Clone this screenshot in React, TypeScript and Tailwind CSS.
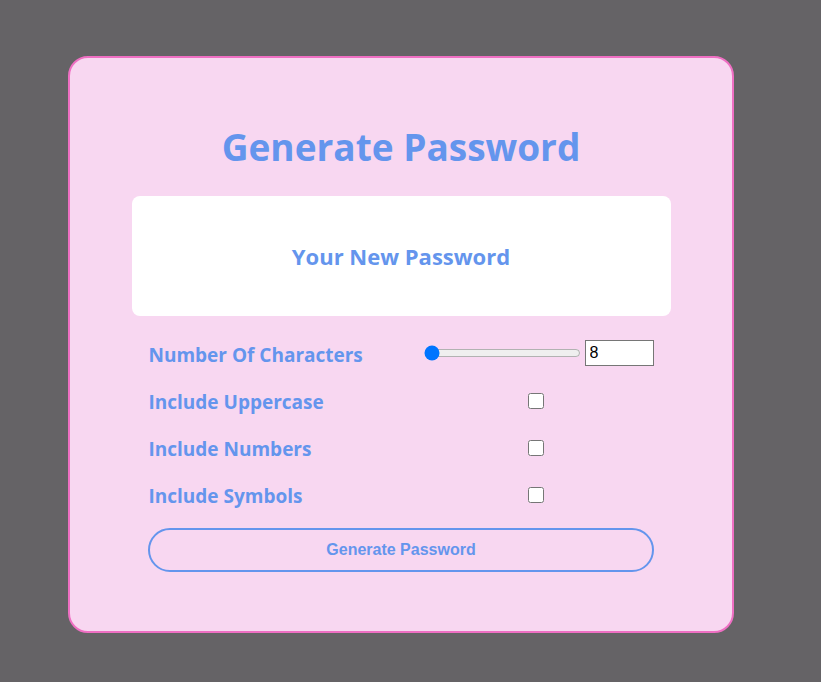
import React, { useState } from "react";

export default function App() {
  const [len, setLen] = useState(8);
  const label = "text-[19px] font-bold text-[#6495ed] leading-none";
  return (
    <div className="min-h-[682px] w-full bg-[#656366] pt-[56px] pl-[68px]" style={{ fontFamily: '"Open Sans", "Noto Sans", sans-serif' }}>
      <div className="w-[666px] h-[577px] rounded-[20px] border-2 border-[#ef6fc3] bg-[#f8d7f1] flex flex-col items-center">
        <h1 className="mt-[66px] text-[37px] font-bold leading-[46px] text-[#6495ed]">Generate Password</h1>
        <div className="mt-[26px] w-[539px] h-[120px] rounded-[8px] bg-white flex items-center justify-center">
          <span className="text-[22px] font-bold text-[#6495ed]">Your New Password</span>
        </div>
        <div className="mt-[16px] w-[505px] grid grid-cols-[273px_232px] auto-rows-[47px] items-center">
          <span className={label}>Number Of Characters</span>
          <div className="flex items-center justify-center gap-[4px] pl-[2px] mb-[6px]">
            <input
              type="range"
              min={8}
              max={32}
              value={len}
              onChange={(e) => setLen(Number(e.target.value))}
              className="w-[160px] m-0"
            />
            <input
              type="number"
              value={len}
              onChange={(e) => setLen(Number(e.target.value))}
              className="w-[69px] h-[26px] border border-[#767676] bg-white px-[4px] text-[16px] text-black"
              style={{ fontFamily: '"Liberation Sans", Arial, sans-serif' }}
            />
          </div>
          <span className={label}>Include Uppercase</span>
          <div className="flex justify-center pr-[4px] mb-[4px]"><input type="checkbox" className="w-[16px] h-[16px]" /></div>
          <span className={label}>Include Numbers</span>
          <div className="flex justify-center pr-[4px] mb-[4px]"><input type="checkbox" className="w-[16px] h-[16px]" /></div>
          <span className={label}>Include Symbols</span>
          <div className="flex justify-center pr-[4px] mb-[4px]"><input type="checkbox" className="w-[16px] h-[16px]" /></div>
        </div>
        <button
          className="mt-[8px] w-[506px] h-[44px] rounded-full border-2 border-[#6495ed] bg-transparent text-[16px] font-bold text-[#6495ed]"
          style={{ fontFamily: '"Liberation Sans", Arial, sans-serif' }}
        >
          Generate Password
        </button>
      </div>
    </div>
  );
}
